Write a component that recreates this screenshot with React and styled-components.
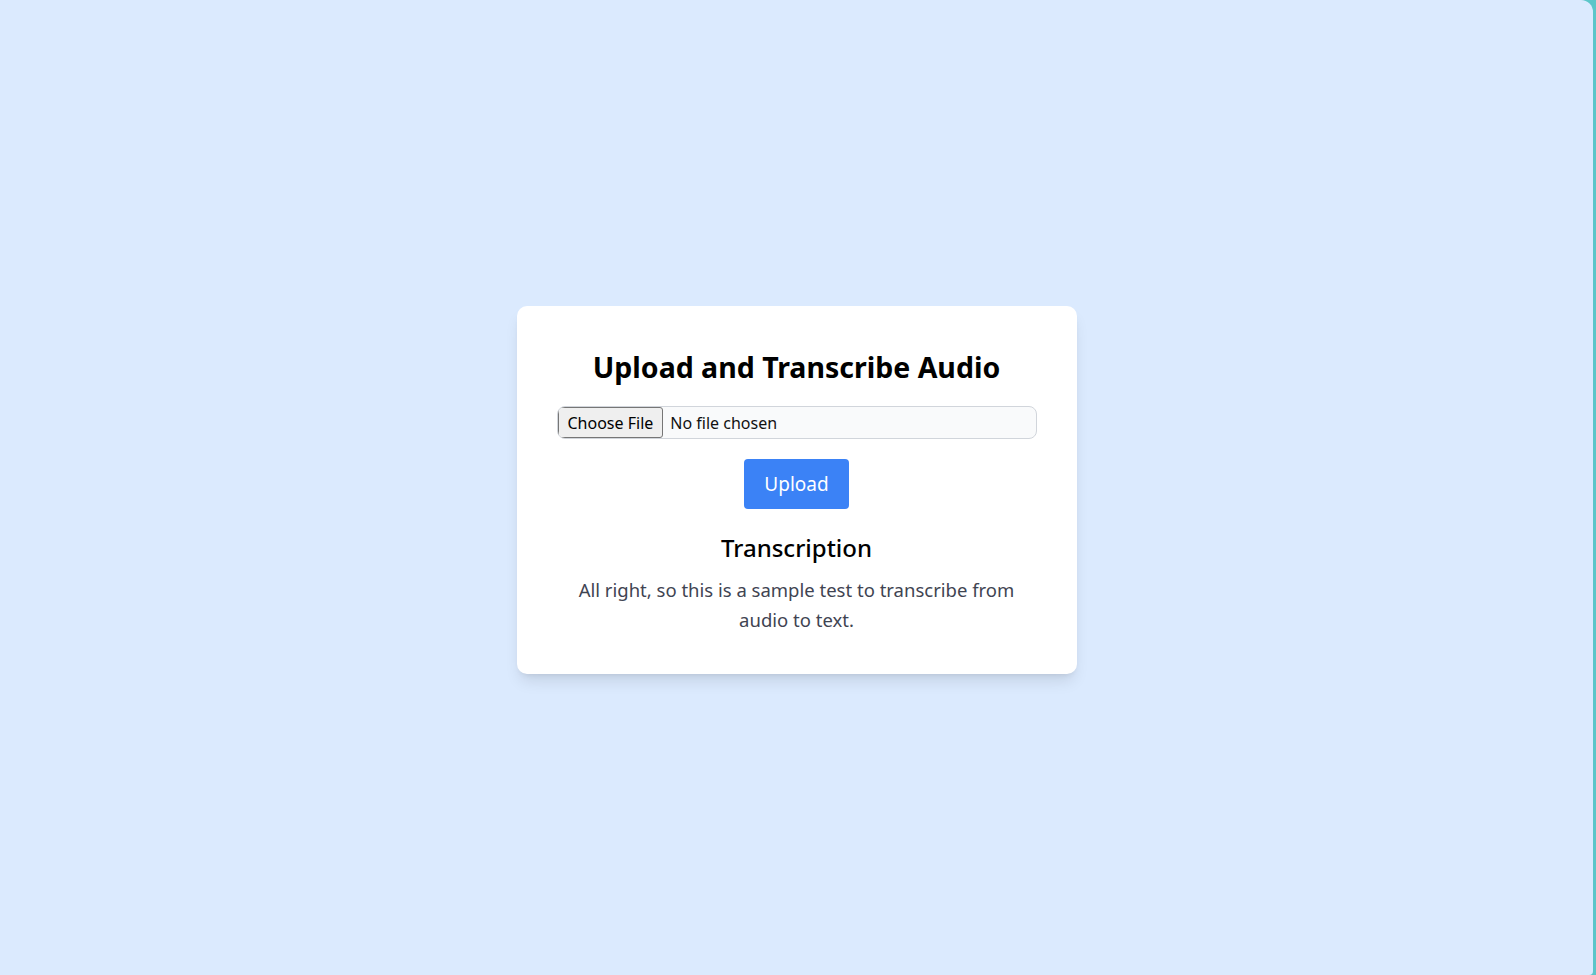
import styled, { createGlobalStyle } from "styled-components";

const GlobalStyle = createGlobalStyle`
  html, body {
    margin: 0;
    padding: 0;
    height: 100%;
    background: #5cc6c9;
  }
  #root {
    height: 100%;
  }
  * {
    box-sizing: border-box;
  }
`;

const Page = styled.div`
  height: 975px;
  width: 1593px;
  padding-top: 5px;
  display: flex;
  align-items: center;
  justify-content: center;
  background: #dbeafe;
  border-top-right-radius: 12px;
  border-bottom-right-radius: 4px;
  font-family: "Noto Sans", "Open Sans", sans-serif;
`;

const Card = styled.div`
  width: 560px;
  padding: 41px 40px 39px;
  background: #ffffff;
  border-radius: 10px;
  box-shadow: 0 10px 15px -3px rgba(0, 0, 0, 0.1),
    0 4px 6px -4px rgba(0, 0, 0, 0.1);
  display: flex;
  flex-direction: column;
  align-items: center;
  text-align: center;
`;

const Title = styled.h1`
  margin: 0 0 19px;
  font-size: 28.5px;
  line-height: 40px;
  font-weight: 700;
  color: #000;
`;

const FileInput = styled.input`
  width: 100%;
  height: 33px;
  border: 1px solid #d1d5db;
  border-radius: 8px;
  background: #f9fafb;
  font-family: "Noto Sans", "Open Sans", sans-serif;
  font-size: 16px;
  color: #111;
  padding: 0;

  &::file-selector-button {
    font-family: inherit;
    font-size: 16px;
    height: 100%;
    margin-right: 7px;
    padding: 0 9px;
    border: 1px solid #767676;
    border-radius: 3px;
    background: #efefef;
    color: #000;
  }
`;

const UploadButton = styled.button`
  margin-top: 20px;
  padding: 11px 20px;
  border: none;
  border-radius: 4px;
  background: #3b82f6;
  color: #fff;
  font-family: inherit;
  font-size: 19px;
  line-height: 28px;
  cursor: pointer;
`;

const SubTitle = styled.h2`
  margin: 23px 0 11px;
  font-size: 24px;
  line-height: 32px;
  font-weight: 500;
  color: #000;
`;

const Result = styled.p`
  margin: 0;
  font-size: 18.5px;
  line-height: 30px;
  color: #3f4452;
`;

const App = () => {
  return (
    <>
      <GlobalStyle />
      <Page>
        <Card>
          <Title>Upload and Transcribe Audio</Title>
          <FileInput type="file" accept="audio/*" />
          <UploadButton>Upload</UploadButton>
          <SubTitle>Transcription</SubTitle>
          <Result>
            All right, so this is a sample test to transcribe from audio to
            text.
          </Result>
        </Card>
      </Page>
    </>
  );
};

export default App;
